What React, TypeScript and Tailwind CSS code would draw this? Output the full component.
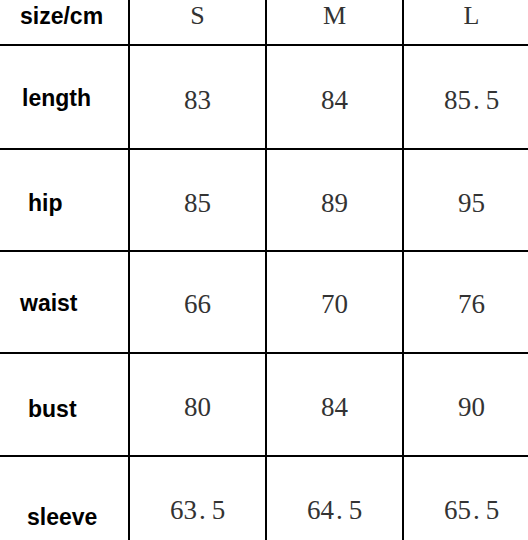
const sizes = ['S', 'M', 'L'];

const rows = [
  { label: 'length', values: ['83', '84', '85.5'], h: 'h-[102px]', lp: 'pt-[41px] pl-[22px]', np: 'pt-[41px]' },
  { label: 'hip', values: ['85', '89', '95'], h: 'h-[100px]', lp: 'pt-[42px] pl-[28px]', np: 'pt-[40px]' },
  { label: 'waist', values: ['66', '70', '76'], h: 'h-[100px]', lp: 'pt-[40px] pl-[20px]', np: 'pt-[39px]' },
  { label: 'bust', values: ['80', '84', '90'], h: 'h-[101px]', lp: 'pt-[44px] pl-[28px]', np: 'pt-[40px]' },
  { label: 'sleeve', values: ['63.5', '64.5', '65.5'], h: 'h-[100px]', lp: 'pt-[49px] pl-[27px]', np: 'pt-[40px]' },
];

function Num({ value }: { value: string }) {
  const [a, b] = value.split('.');
  return (
    <span>
      {a}
      {b !== undefined && (
        <>
          <span className="ml-[2px] mr-[6px]">.</span>
          {b}
        </>
      )}
    </span>
  );
}

export default function App() {
  return (
    <div className="w-[528px] h-[540px] overflow-hidden bg-white">
      <div className="flex flex-col gap-[2px] bg-black w-[540px]">
        {/* header */}
        <div className="grid grid-cols-[128px_135px_135px_135px] gap-[2px] h-[44px]">
          <div className="bg-white pt-[5px] pl-[20px] font-['Liberation_Sans',sans-serif] font-bold text-[23px] leading-none text-black">
            size/cm
          </div>
          {sizes.map((s) => (
            <div
              key={s}
              className="bg-white pt-[3px] text-center font-['Liberation_Serif',serif] text-[26px] leading-none text-[#333]"
            >
              {s}
            </div>
          ))}
        </div>

        {rows.map((r) => (
          <div key={r.label} className={`grid grid-cols-[128px_135px_135px_135px] gap-[2px] ${r.h}`}>
            <div className={`bg-white ${r.lp} font-['Liberation_Sans',sans-serif] font-bold text-[23px] leading-none text-black`}>
              {r.label}
            </div>
            {r.values.map((v, i) => (
              <div
                key={i}
                className={`bg-white ${r.np} text-center font-['Liberation_Serif',serif] text-[27px] leading-none text-[#333]`}
              >
                <Num value={v} />
              </div>
            ))}
          </div>
        ))}
      </div>
    </div>
  );
}
